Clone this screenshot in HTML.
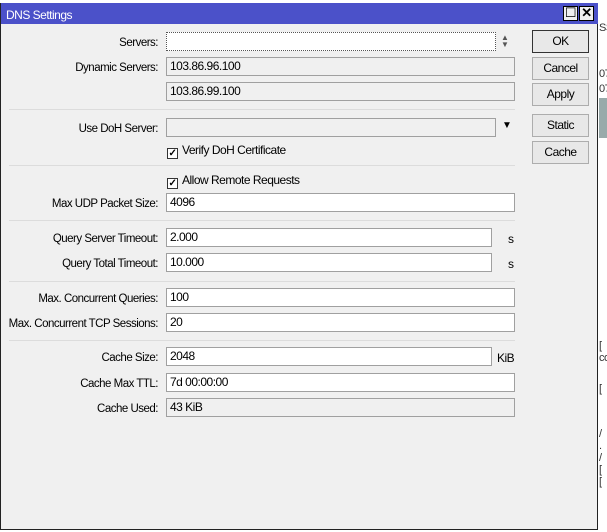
<!DOCTYPE html>
<html><head><style>
*{margin:0;padding:0;box-sizing:border-box}
body{width:607px;height:532px;background:#fff;position:relative;overflow:hidden;font-family:"Liberation Sans",sans-serif;font-size:12px;letter-spacing:-0.5px;color:#000}
.bgtext{position:absolute;font-size:11px;color:#333}
#win{position:absolute;left:0;top:3px;width:598px;height:527px;background:#f0f0f0;border:1px solid #222;border-top:none}
#title{position:absolute;left:0;top:0;width:597px;height:21px;background:#4b51c9;color:#fff;padding:5px 0 0 5px;font-size:12px}
.tb{position:absolute;top:3px;width:15px;height:15px;background:#f0f0f0;border:1px solid #000;color:#000;font-size:13px;line-height:12px;text-align:center;font-weight:bold}
.lbl{position:absolute;right:439px;text-align:right;white-space:nowrap;font-size:11.5px;margin-top:2px}
.f{position:absolute;left:165px;height:19px;background:#fff;border:1px solid #a0a0a0;padding:1px 3px;white-space:nowrap}
.f.ro{background:#f0f0f0}
.sep{position:absolute;left:8px;width:506px;height:1px;background:#dcdcdc}
.btn{position:absolute;left:531px;width:57px;height:23px;background:#e8e8e8;border:1px solid #adadad;text-align:center;line-height:21px}
.cb{position:absolute;left:166px;white-space:nowrap}
.cb span{display:inline-block;width:11px;height:11px;border:1px solid #333;background:#fff;vertical-align:-2px;margin-right:4px;font-size:10px;line-height:9px;text-align:center;font-weight:bold}
</style></head><body>
<div class="bgtext" style="left:599px;top:22px">SS</div>
<div class="bgtext" style="left:599px;top:68px">07</div>
<div class="bgtext" style="left:599px;top:83px">07</div>
<div style="position:absolute;left:599px;top:98px;width:8px;height:40px;background:#9aa"></div>
<div class="bgtext" style="left:599px;top:340px">[<br>co</div>
<div class="bgtext" style="left:599px;top:383px">[</div>
<div class="bgtext" style="left:599px;top:428px">/<br>.<br>/<br>[<br>[</div>
<div id="win">
<div id="title">DNS Settings</div>
<div class="tb" style="left:562px;font-weight:normal">☐</div>
<div class="tb" style="left:578px">✕</div>

<div class="lbl" style="top:32px">Servers:</div>
<div class="f" style="top:29px;width:330px;border:1px dotted #555"></div>
<div style="position:absolute;left:500px;top:31px;font-size:8px;line-height:7px;color:#555">▲<br>▼</div>
<div class="lbl" style="top:57px">Dynamic Servers:</div>
<div class="f ro" style="top:54px;width:349px">103.86.96.100</div>
<div class="f ro" style="top:79px;width:349px">103.86.99.100</div>
<div class="sep" style="top:106px"></div>

<div class="lbl" style="top:118px">Use DoH Server:</div>
<div class="f ro" style="top:115px;width:330px"></div>
<div style="position:absolute;left:501px;top:117px;font-size:10px">▼</div>
<div class="cb" style="top:140px"><span>✓</span>Verify DoH Certificate</div>
<div class="sep" style="top:162px"></div>
<div class="cb" style="top:170px"><span>✓</span>Allow Remote Requests</div>
<div class="lbl" style="top:193px">Max UDP Packet Size:</div>
<div class="f" style="top:190px;width:349px">4096</div>
<div class="sep" style="top:217px"></div>

<div class="lbl" style="top:228px">Query Server Timeout:</div>
<div class="f" style="top:225px;width:326px">2.000</div>
<div style="position:absolute;left:507px;top:229px">s</div>
<div class="lbl" style="top:253px">Query Total Timeout:</div>
<div class="f" style="top:250px;width:326px">10.000</div>
<div style="position:absolute;left:507px;top:254px">s</div>
<div class="sep" style="top:278px"></div>

<div class="lbl" style="top:288px">Max. Concurrent Queries:</div>
<div class="f" style="top:285px;width:349px">100</div>
<div class="lbl" style="top:313px">Max. Concurrent TCP Sessions:</div>
<div class="f" style="top:310px;width:349px">20</div>
<div class="sep" style="top:337px"></div>

<div class="lbl" style="top:347px">Cache Size:</div>
<div class="f" style="top:344px;width:326px">2048</div>
<div style="position:absolute;left:496px;top:348px">KiB</div>
<div class="lbl" style="top:373px">Cache Max TTL:</div>
<div class="f" style="top:370px;width:349px">7d 00:00:00</div>
<div class="lbl" style="top:398px">Cache Used:</div>
<div class="f ro" style="top:395px;width:349px">43 KiB</div>

<div class="btn" style="top:27px;border:1px solid #333">OK</div>
<div class="btn" style="top:54px">Cancel</div>
<div class="btn" style="top:80px">Apply</div>
<div class="btn" style="top:111px">Static</div>
<div class="btn" style="top:138px">Cache</div>
</div>
</body></html>
